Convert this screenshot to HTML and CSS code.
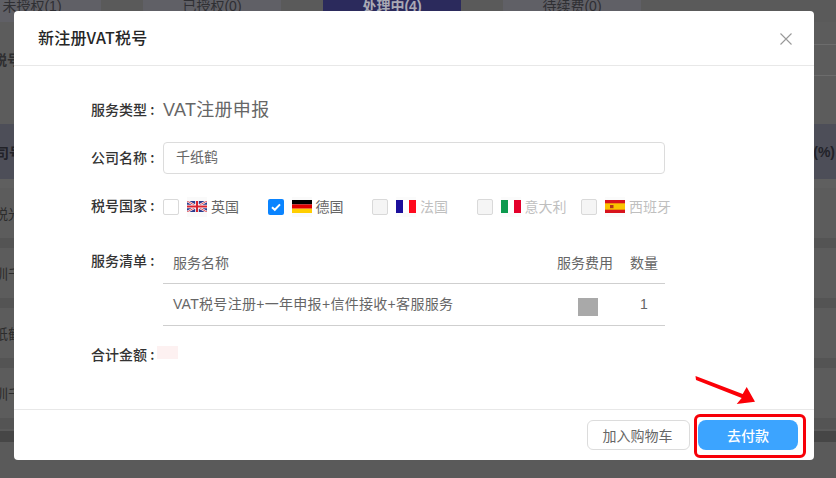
FILE: index.html
```html
<!DOCTYPE html>
<html lang="zh">
<head>
<meta charset="utf-8">
<title>新注册VAT税号</title>
<link rel="stylesheet" href="styles.css">
</head>
<body>
<div class="page">
  <div class="tabs">
    <div class="tab tab-first">未授权(1)</div>
    <div class="tab">已授权(0)</div>
    <div class="tab tab-active">处理中(4)</div>
    <div class="tab">待续费(0)</div>
  </div>
  <div class="filter">
    <span class="bg-text">税号</span>
    <span class="bg-select">选择</span>
  </div>
  <div class="thead"><span>司号</span><b>(%)</b></div>
  <div class="band-first"></div>
  <div class="row"><span>税光</span></div>
  <div class="band"></div>
  <div class="row"><span>圳千</span></div>
  <div class="band"></div>
  <div class="row"><span>纸鹤</span></div>
  <div class="band"></div>
  <div class="row"><span>圳千</span></div>
  <div class="band band-last"></div>
  <div class="bar"></div>
</div>

<div class="modal">
  <header class="modal-head">
    <h1>新注册VAT税号</h1>
    <svg class="close" width="12" height="12" viewBox="0 0 12 12"><path d="M.5.5l11 11M11.5.5l-11 11" stroke="#999" stroke-width="1.1" fill="none"/></svg>
  </header>
  <div class="modal-body">
    <div class="field field-type">
      <label>服务类型 :</label>
      <div class="type-value">VAT注册申报</div>
    </div>
    <div class="field field-name">
      <label>公司名称 :</label>
      <div class="input">千纸鹤</div>
    </div>
    <div class="field field-country">
      <label>税号国家 :</label>
      <div class="countries">
        <div class="country">
          <span class="check"></span>
          <span class="flag"><svg width="20" height="11" viewBox="0 0 20 11"><rect width="20" height="11" fill="#2b3a8c"/><path d="M0 0l20 11M20 0L0 11" stroke="#fff" stroke-width="2.2"/><path d="M0 0l20 11M20 0L0 11" stroke="#d8232f" stroke-width=".8"/><path d="M10 0v11M0 5.500h20" stroke="#fff" stroke-width="3.600"/><path d="M10 0v11M0 5.500h20" stroke="#d8232f" stroke-width="2"/></svg></span>
          <span class="name">英国</span>
        </div>
        <div class="country">
          <span class="check check-on"><svg width="16" height="16" viewBox="0 0 16 16"><path d="M4 8.200l2.800 2.600L12 5.400" stroke="#fff" stroke-width="2" fill="none"/></svg></span>
          <span class="flag"><svg width="20" height="13" viewBox="0 0 20 13"><rect width="20" height="4.400" fill="#000"/><rect y="4.400" width="20" height="4.300" fill="#e00000"/><rect y="8.700" width="20" height="4.300" fill="#ffce00"/></svg></span>
          <span class="name">德国</span>
        </div>
        <div class="country country-off">
          <span class="check"></span>
          <span class="flag"><svg width="20" height="13" viewBox="0 0 20 13"><rect width="7" height="13" fill="#1c0f9c"/><rect x="7" width="6" height="13" fill="#fff"/><rect x="13" width="7" height="13" fill="#ff0a1e"/></svg></span>
          <span class="name">法国</span>
        </div>
        <div class="country country-off">
          <span class="check"></span>
          <span class="flag"><svg width="20" height="13" viewBox="0 0 20 13"><rect width="7" height="13" fill="#0c9a4f"/><rect x="7" width="6" height="13" fill="#fff"/><rect x="13" width="7" height="13" fill="#e4002b"/></svg></span>
          <span class="name">意大利</span>
        </div>
        <div class="country country-off">
          <span class="check"></span>
          <span class="flag"><svg width="20" height="13" viewBox="0 0 20 13"><rect width="20" height="13" fill="#d8141c"/><rect y="3.300" width="20" height="6.400" fill="#fac400"/><rect x="5" y="5" width="3.500" height="3.200" fill="#b5361c"/></svg></span>
          <span class="name">西班牙</span>
        </div>
      </div>
    </div>
    <div class="field field-list">
      <label>服务清单 :</label>
      <div class="list">
        <div class="list-head">
          <span class="col-name">服务名称</span>
          <span class="col-fee">服务费用</span>
          <span class="col-qty">数量</span>
        </div>
        <div class="list-row">
          <span class="col-name">VAT税号注册+一年申报+信件接收+客服服务</span>
          <span class="col-fee"><i class="mask-gray"></i></span>
          <span class="col-qty">1</span>
        </div>
      </div>
    </div>
    <div class="field field-total">
      <label>合计金额 :</label>
      <i class="mask-pink"></i>
    </div>
  </div>
  <footer class="modal-foot">
    <button class="btn btn-cart">加入购物车</button>
    <button class="btn btn-pay">去付款</button>
  </footer>
</div>

<div class="mark-box"></div>
<svg class="mark-arrow" width="70" height="36" viewBox="0 0 70 36"><polygon points=".5,1 1,5 46.700,23 41.700,29 60,26.700 51.700,12 47.700,19" fill="#fb0007"/></svg>
</body>
</html>
```
FILE: styles.css
```css
* { box-sizing: border-box; }
html, body {
  margin: 0;
  height: 478px;
  overflow: hidden;
}
body {
  position: relative;
  width: 836px;
  background: #585858;
  font-family: "Liberation Sans", "Noto Sans CJK SC", sans-serif;
  font-size: 14px;
  color: #666;
}

/* dimmed page behind the dialog */
.page {
  height: 478px;
  color: #2a2a2c;
  background: #5a5a5a;
  overflow: hidden;
}
.tabs {
  display: flex;
  height: 22px;
  gap: 42px;
  background: #5a5a5a;
  margin-left: -37px;
}
.tab {
  width: 138px;
  height: 22px;
  border-radius: 0 0 12px 12px;
  background: #606066;
  text-align: center;
  line-height: 12px;
  color: #2f2f33;
}
.tab-first { color: #2f2f33; }
.tab-active {
  background: #2b2a5c;
  color: #a9a9b4;
  font-weight: 700;
}
.filter {
  display: flex;
  justify-content: space-between;
  height: 102px;
  padding-top: 22px;
  background: #5c5c5c;
}
.bg-text {
  margin-left: -7px;
  line-height: 32px;
  font-weight: 700;
  font-size: 14px;
  color: #2e2e30;
}
.bg-select {
  width: 60px;
  height: 32px;
  margin-right: -38px;
  padding-left: 42px;
  border: 1px solid #6c6c6c;
  border-width: 1px 0;
  line-height: 30px;
  color: #7a7a7a;
  white-space: nowrap;
  overflow: hidden;
}
.thead {
  display: flex;
  justify-content: space-between;
  align-items: center;
  height: 55px;
  padding-right: 1px;
  background: #4d4e58;
  font-weight: 700;
  color: #222228;
}
.thead span { margin-left: -5px; }
.band-first { height: 9px; background: #5f5f5f; }
.band { height: 10px; background: #545454; }
.band-last { height: 11px; }
.row {
  height: 50px;
  background: #5c5c5c;
  display: flex;
  align-items: center;
  color: #2c2c2c;
}
.row span { margin-left: -6px; }
.bar { height: 2px; background: #6a6a6a; }
.bar::after {
  content: "";
  display: block;
  height: 11px;
  margin-top: 2px;
  background: #464646;
}

/* dialog */
.modal {
  position: absolute;
  left: 14px;
  top: 11px;
  width: 800px;
  height: 449px;
  background: #fff;
  border-radius: 4px;
  display: flex;
  flex-direction: column;
}
.modal-head {
  flex: none;
  height: 55px;
  display: flex;
  align-items: center;
  justify-content: space-between;
  padding: 0 22px 2px 24px;
  border-bottom: 1px solid #e8e8e8;
}
.modal-head h1 {
  margin: 0;
  font-family: "Noto Sans CJK SC", sans-serif;
  font-size: 16px;
  font-weight: 500;
  letter-spacing: .2px;
  color: #262626;
}
.close { display: block; margin-top: 4px; }
.modal-body {
  flex: 1;
  padding-left: 77px;
}
.field {
  display: flex;
  align-items: center;
}
.field label {
  flex: none;
  width: 72px;
  margin-bottom: 3px;
  font-family: "Noto Sans CJK SC", sans-serif;
  font-weight: 500;
  color: #333;
  font-size: 14px;
  white-space: nowrap;
}
.field-type { height: 32px; margin-top: 28px; }
.type-value {
  font-size: 18px;
  letter-spacing: .3px;
  color: #666;
  margin-bottom: 4px;
}
.field-name { margin-top: 16px; }
.input {
  width: 502px;
  height: 32px;
  border: 1px solid #dcdcdc;
  border-radius: 4px;
  padding-left: 12px;
  line-height: 28px;
  color: #666;
}
.field-country { margin-top: 16px; height: 33px; }
.countries { display: flex; }
.country {
  width: 104.500px;
  display: flex;
  align-items: center;
  white-space: nowrap;
}
.check {
  flex: none;
  width: 16px;
  height: 16px;
  border: 1px solid #d9d9d9;
  border-radius: 2px;
  background: #fff;
  margin-right: 8px;
}
.check-on {
  border: 0;
  background: #0a84ff;
}
.check svg { display: block; }
.flag {
  flex: none;
  width: 20px;
  height: 20px;
  background: #fafafa;
  display: flex;
  align-items: center;
  margin-right: 4px;
}
.flag svg { display: block; }
.name { color: #666; margin-bottom: 2px; }
.country-off .check { background: #f5f5f5; }
.country-off .name { color: #bfbfbf; }
.country-off .flag { background: #fbfbfb; }
.field-list {
  align-items: flex-start;
  margin-top: 18px;
}
.field-list label { line-height: 20px; margin-top: 9px; margin-bottom: 0; }
.list { width: 502px; }
.list-head, .list-row {
  display: flex;
  align-items: center;
  border-bottom: 1px solid #cfcfcf;
  padding-left: 10px;
}
.list-head { height: 43px; padding-bottom: 1px; }
.list-row { height: 42px; }
.list-row .col-name { letter-spacing: .3px; margin-bottom: 3px; }
.col-name { flex: 1; white-space: nowrap; }
.col-fee {
  width: 56px;
  white-space: nowrap;
  text-align: right;
  display: flex;
  justify-content: flex-end;
}
.col-qty {
  width: 52px;
  padding-left: 17px;
  white-space: nowrap;
}
.list-row .col-qty { padding-left: 27px; margin-bottom: 2px; font-size: 14px; }
.mask-gray {
  display: block;
  width: 20px;
  height: 18px;
  margin: 4px 15px 0 0;
  background: #a9a9a9;
}
.field-total { margin-top: 18px; height: 20px; }
.field-total label { width: 66px; margin-bottom: 0; }
.mask-pink {
  display: block;
  width: 21px;
  height: 13px;
  background: #fdf1f1;
  margin-top: -4px;
}
.modal-foot {
  flex: none;
  height: 51px;
  border-top: 1px solid #e8e8e8;
  display: flex;
  align-items: flex-start;
  justify-content: flex-end;
  gap: 8px;
  padding: 10px 16px 0 0;
}
.btn {
  height: 30px;
  border-radius: 6px;
  font: inherit;
  padding: 0;
}
.btn-cart {
  width: 103px;
  padding-right: 2px;
  border: 1px solid #dcdcdc;
  background: #fff;
  color: #666;
}
.btn-pay {
  width: 100px;
  border: 0;
  border-radius: 8px;
  background: #3ca4ff;
  color: #fff;
  font-family: "Noto Sans CJK SC", sans-serif;
  font-weight: 500;
}

/* annotations over the dialog */
.mark-box {
  position: absolute;
  left: 694px;
  top: 414px;
  width: 112px;
  height: 44px;
  border: 3px solid #f70008;
  border-radius: 6px;
}
.mark-arrow {
  position: absolute;
  left: 695px;
  top: 375px;
}
```
